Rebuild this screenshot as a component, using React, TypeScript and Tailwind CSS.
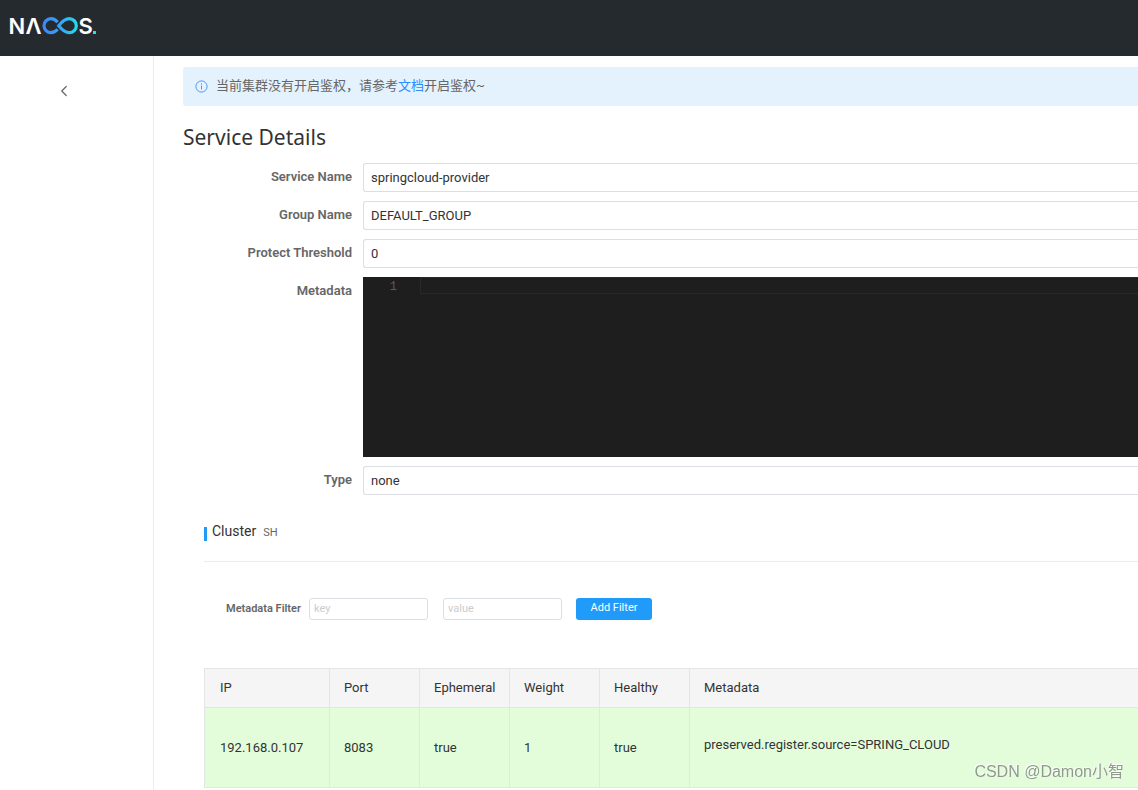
import React from "react";
import { LuChevronLeft } from "react-icons/lu";

interface Instance {
  ip: string;
  port: number;
  ephemeral: boolean;
  weight: number;
  healthy: boolean;
  metadata: string;
}

const instances: Instance[] = [
  {
    ip: "192.168.0.107",
    port: 8083,
    ephemeral: true,
    weight: 1,
    healthy: true,
    metadata: "preserved.register.source=SPRING_CLOUD",
  },
];

const columns = [
  { title: "IP", width: "w-[125px] pl-[15px]" },
  { title: "Port", width: "w-[90px] pl-[14px]" },
  { title: "Ephemeral", width: "w-[90px] pl-[14px]" },
  { title: "Weight", width: "w-[90px] pl-[14px]" },
  { title: "Healthy", width: "w-[90px] pl-[14px]" },
  { title: "Metadata", width: "pl-[14px]" },
];

const Logo = () => (
  <svg width="96" height="36" viewBox="-4 -8 96 36" role="img" aria-label="Nacos">
    <defs>
      <linearGradient id="loop" gradientUnits="userSpaceOnUse" x1="32" y1="0" x2="68" y2="0">
        <stop offset="0" stopColor="#3f83f8" />
        <stop offset="0.5" stopColor="#35a4f5" />
        <stop offset="1" stopColor="#1fe0ee" />
      </linearGradient>
    </defs>
    <g fill="#fff" fontFamily="Inter, sans-serif" fontWeight="600" fontSize="22">
      <text x="-1.500" y="17.700">N</text>
      <text x="15.500" y="17.700">Λ</text>
      <text x="68.500" y="17.700">S</text>
    </g>
    {/* Infinity loop */}
    <g fill="none" stroke="url(#loop)" strokeWidth="3.2">
      <path d="M47.600 6.200C45.600 3.900 43.500 2.700 41 2.700a7 7 0 0 0 0 14c2.500 0 4.600-1.200 6.600-3.500" />
      <path d="M48.700 9.700C51.500 6.200 55 2.700 59.300 2.700a7 7 0 0 1 0 14C55 16.700 51.500 13.200 48.700 9.700Z" />
    </g>
    <rect x="83" y="15" width="3" height="3" fill="#1fe0ee" />
  </svg>
);

const Field = ({ id, label, value }: { id: string; label: string; value: string }) => (
  <div className="flex">
    <label htmlFor={id} className="w-[169px] shrink-0 text-right text-[13px] leading-7 font-semibold text-[#666]">
      {label}
    </label>
    <input
      id={id}
      readOnly
      defaultValue={value}
      className="ml-[11px] h-[29px] min-w-0 flex-1 rounded-l-[3px] border border-r-0 border-[#dcdee3] px-[7px] text-[13px] text-[#333] outline-none"
    />
  </div>
);

const App = () => {
  return (
    <div className="flex min-h-screen flex-col overflow-x-hidden bg-white font-[Roboto,'Noto_Sans_CJK_SC',sans-serif] text-[13px] text-[#333]">
      <header className="flex h-14 items-start bg-[#252a2f] px-[6px] pt-2">
        <a href="#">
          <Logo />
        </a>
      </header>

      <div className="flex flex-1">
        {/* Sidebar */}
        <aside className="w-[154px] shrink-0 border-r border-[#ebecec]">
          <button aria-label="Back" className="mt-[26px] ml-[55px] block text-[#666]">
            <LuChevronLeft size={18} strokeWidth={1.6} />
          </button>
        </aside>

        <main className="min-w-0 flex-1 pt-[11px] pl-[29px]">
          {/* Auth notice */}
          <div className="flex h-[39px] items-center rounded-l-[3px] bg-[#e4f2fe] pl-3 text-[#666]">
            <svg width="13" height="13" viewBox="0 0 13 13" fill="none" stroke="#4a94ff" className="mr-2">
              <circle cx="6.5" cy="6.5" r="5.600" />
              <path d="M6.500 5.500v4M6.500 3.300v1.200" />
            </svg>
            <p className="pb-[2px] leading-5">
              当前集群没有开启鉴权，请参考
              <a href="#" className="text-[#2b8cff]">
                文档
              </a>
              开启鉴权~
            </p>
          </div>

          <h1 className="mt-4 mb-[11px] font-['Noto_Sans',sans-serif] text-[21px] leading-[30px]">Service Details</h1>

          {/* Service form */}
          <form className="flex flex-col gap-[9px]">
            <Field id="name" label="Service Name" value="springcloud-provider" />
            <Field id="group" label="Group Name" value="DEFAULT_GROUP" />
            <Field id="threshold" label="Protect Threshold" value="0" />
            <div className="flex">
              <label htmlFor="metadata" className="w-[169px] shrink-0 text-right leading-7 font-semibold text-[#666]">
                Metadata
              </label>
              <div className="ml-[11px] flex h-[180px] flex-1 items-start bg-[#1e1e1e] font-['Liberation_Mono',monospace] text-xs">
                <span className="w-[57px] pr-[23px] text-right leading-5 text-[#5a5a5a]">1</span>
                <textarea
                  id="metadata"
                  rows={1}
                  className="h-[17px] min-w-0 flex-1 resize-none overflow-hidden border border-r-0 border-[#292929] text-[#d4d4d4] outline-none"
                />
              </div>
            </div>
            <Field id="type" label="Type" value="none" />
          </form>

          {/* Cluster */}
          <section className="pl-[21px]">
            <div className="mt-[27px] flex h-10 items-start border-b border-[#ebecec] pt-[1px]">
              <h2 className="flex items-center">
                <span className="mt-[3px] h-[14px] w-[3px] bg-[#209bfa]" />
                <span className="ml-[5px] flex items-baseline gap-[7px] leading-4">
                  <span className="text-sm leading-4">Cluster</span>
                  <span className="text-[11px] leading-4 text-[#666]">SH</span>
                </span>
              </h2>
            </div>

            <form className="mt-9 flex h-[22px] items-center text-[11px]">
              <label htmlFor="filter-key" className="ml-[22px] w-[83px] font-semibold text-[#666]">
                Metadata Filter
              </label>
              <input
                id="filter-key"
                placeholder="key"
                className="h-[22px] w-[119px] rounded-[3px] border border-[#dcdee3] px-1 pb-[2px] outline-none placeholder:text-[#ccc]"
              />
              <input
                aria-label="value"
                placeholder="value"
                className="ml-[15px] h-[22px] w-[119px] rounded-[3px] border border-[#dcdee3] px-1 pb-[2px] outline-none placeholder:text-[#ccc]"
              />
              <button type="button" className="ml-[14px] h-[22px] w-[76px] rounded-[3px] bg-[#209bfa] pb-[2px] text-white">
                Add Filter
              </button>
            </form>

            <table className="mt-12 w-full table-fixed border-collapse border-y border-l border-[#e4e6e6] text-left">
              <thead>
                <tr className="h-[39px] bg-[#f5f5f5]">
                  {columns.map((column) => (
                    <th key={column.title} className={`${column.width} border border-r-0 border-[#e4e6e6] font-normal`}>
                      {column.title}
                    </th>
                  ))}
                </tr>
              </thead>
              <tbody>
                {instances.map((item) => (
                  <tr key={item.ip} className="h-20 bg-[#e3fddb]">
                    <td className="border border-r-0 border-[#e4e6e6] pl-[15px]">{item.ip}</td>
                    <td className="border border-r-0 border-[#e4e6e6] pl-[14px]">{item.port}</td>
                    <td className="border border-r-0 border-[#e4e6e6] pl-[14px]">{String(item.ephemeral)}</td>
                    <td className="border border-r-0 border-[#e4e6e6] pl-[14px]">{item.weight}</td>
                    <td className="border border-r-0 border-[#e4e6e6] pl-[14px]">{String(item.healthy)}</td>
                    <td className="border border-r-0 border-[#e4e6e6] pb-[6px] pl-[14px]">{item.metadata}</td>
                  </tr>
                ))}
              </tbody>
            </table>
          </section>
        </main>
      </div>

      {/* Watermark */}
      <p className="fixed right-[14px] bottom-[6px] font-['Liberation_Sans','Noto_Sans_CJK_SC',sans-serif] text-base leading-6 text-[#8f9a8c] [text-shadow:-1px_-1px_0_#fff]">
        CSDN @Damon小智
      </p>
    </div>
  );
};

export default App;
